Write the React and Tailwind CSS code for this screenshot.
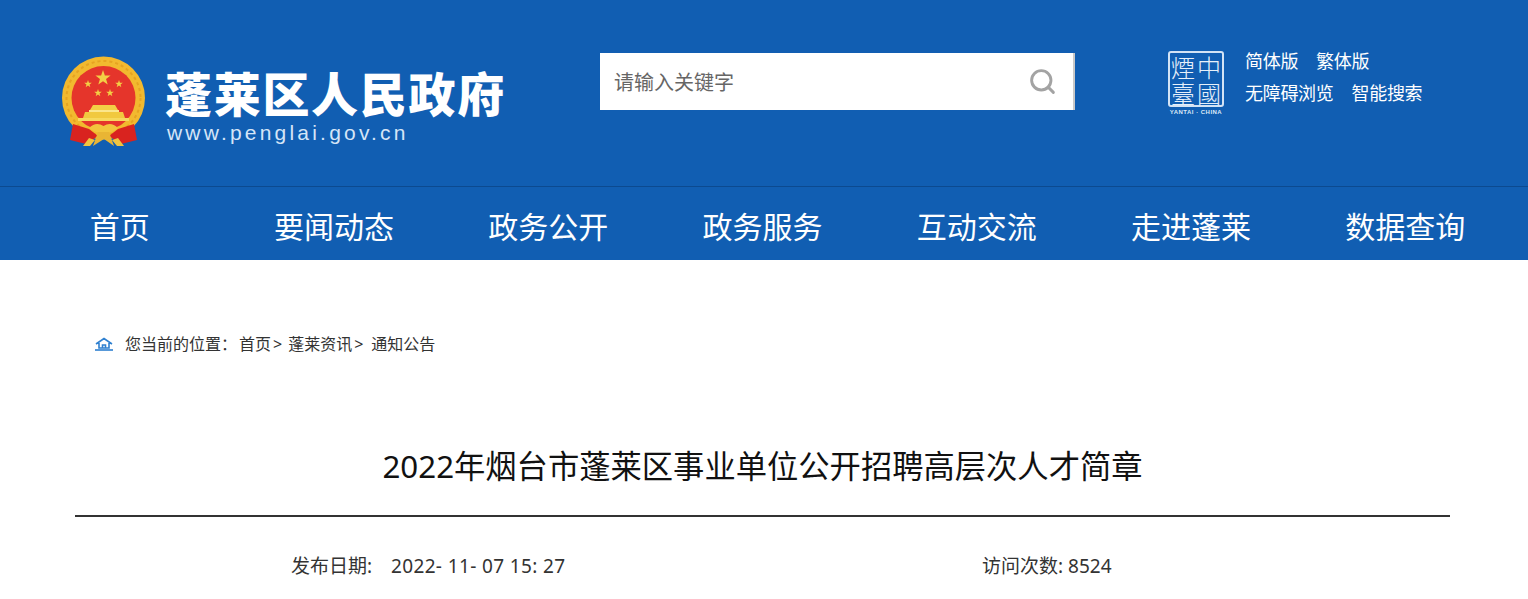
import { Search } from 'lucide-react';

const navItems = ['首页', '要闻动态', '政务公开', '政务服务', '互动交流', '走进蓬莱', '数据查询'];

const Star = ({ x, y, r }) => {
  const points = [];
  for (let i = 0; i < 10; i++) {
    const radius = i % 2 === 0 ? r : r * 0.4;
    const angle = (Math.PI / 5) * i - Math.PI / 2;
    points.push(`${x + radius * Math.cos(angle)},${y + radius * Math.sin(angle)}`);
  }
  return <polygon points={points.join(' ')} fill="#f3cf45" />;
};

const Emblem = () => (
  <svg width="90" height="92" viewBox="0 0 90 92" className="shrink-0">
    {/* wheat ring */}
    <circle cx="44.5" cy="42" r="41.5" fill="#f2b92f" />
    <circle cx="44.5" cy="42" r="37" fill="none" stroke="#e6a321" strokeWidth="2" strokeDasharray="3 3" />
    <circle cx="44.5" cy="42" r="32" fill="#e5352b" />
    {/* stars */}
    <Star x={44} y={22} r={8} />
    <Star x={29} y={28} r={4} />
    <Star x={60} y={28} r={4} />
    <Star x={39} y={37} r={4} />
    <Star x={51} y={37} r={4} />
    {/* gate */}
    <path d="M34 49 H56 L59 54 H31 Z" fill="#f3cf45" />
    <rect x="30" y="54" width="30" height="2" fill="#fbe68c" />
    <path d="M26 56 H64 L66 62 H24 Z" fill="#f1c93f" />
    <rect x="19" y="62" width="51" height="3" fill="#f6d95e" />
    {/* ribbons */}
    <path d="M14 68 L11 84 L27 88 L39 80 L30 73 Z" fill="#d9231f" />
    <path d="M75 68 L78 84 L62 88 L50 80 L59 73 Z" fill="#d9231f" />
    {/* knot */}
    <path d="M30 72 Q37 65 44.5 70 Q52 65 59 72 Q52 78 44.5 76 Q37 78 30 72 Z" fill="#f2c53d" />
    <path d="M34 90 L39 76 H50 L55 90 L45 83 Z" fill="#e9b534" />
    <path d="M24 90 L30 82 L36 84 L31 90 Z" fill="#f0c440" />
    <path d="M65 90 L59 82 L53 84 L58 90 Z" fill="#f0c440" />
  </svg>
);

const YantaiSeal = () => (
  <div className="flex flex-col items-center w-[56px] shrink-0">
    <div className="w-[56px] h-[56px] border-2 border-[#d3e3f5] rounded-[3px] grid grid-cols-2 grid-rows-2 place-items-center text-[24px] leading-[25px] font-extralight text-[#e6f0fa] font-['Noto_Sans_CJK_TC',sans-serif]">
      <span>煙</span>
      <span>中</span>
      <span>臺</span>
      <span>國</span>
    </div>
    <span className="mt-[2px] text-[6px] leading-[7px] font-bold tracking-[0.08em] text-[#dce9f7] whitespace-nowrap font-['Liberation_Sans',sans-serif]">
      YANTAI · CHINA
    </span>
  </div>
);

export default function App() {
  return (
    <div className="h-[599px] overflow-hidden bg-white font-['Noto_Sans','Noto_Sans_CJK_SC',sans-serif] text-[#333]">
      {/* Header */}
      <header className="h-[187px] bg-[#115eb2] border-b border-[#0c4a90] flex items-start text-white">
        <div className="ml-[59px] mt-[56px]">
          <Emblem />
        </div>
        <div className="ml-[16px] mt-[63px] w-[347px] shrink-0">
          <div className="text-[47px] leading-[58px] font-black tracking-[1.7px] whitespace-nowrap font-['Noto_Sans_CJK_SC',sans-serif]">
            蓬莱区人民政府
          </div>
          <div className="pl-[2px] text-[21px] leading-[24px] tracking-[3.2px] text-[#d5e5f7] whitespace-nowrap font-['Liberation_Sans',sans-serif]">
            www.penglai.gov.cn
          </div>
        </div>
        <div className="ml-[88px] mt-[53px] w-[475px] h-[57px] bg-white border-r-2 border-[#c9c9c9] flex items-center justify-between pl-[14px] pr-[16px] shrink-0">
          <span className="text-[20px] text-[#666] pt-[2px]">请输入关键字</span>
          <Search size={29} strokeWidth={2.4} className="text-[#a3a3a3]" />
        </div>
        <div className="ml-[93px] mt-[51px]">
          <YantaiSeal />
        </div>
        <div className="ml-[21px] mt-[45px] text-[18px] leading-[32px] tracking-[-0.3px]">
          <div className="flex gap-[18px]">
            <span>简体版</span>
            <span>繁体版</span>
          </div>
          <div className="flex gap-[18px]">
            <span>无障碍浏览</span>
            <span>智能搜索</span>
          </div>
        </div>
      </header>

      {/* Nav */}
      <nav className="h-[73px] bg-[#115eb2] text-white">
        <div className="w-[1500px] ml-[12.5px] h-full grid grid-cols-7 items-center">
          {navItems.map(item => (
            <a key={item} className="text-center text-[30px] leading-[79px] h-full">{item}</a>
          ))}
        </div>
      </nav>

      {/* Breadcrumb */}
      <div className="mt-[72px] ml-[95px] flex items-center h-[24px] text-[16px] text-[#333] whitespace-nowrap">
        <svg width="18" height="14" viewBox="0 0 18 14" fill="none" stroke="#2f80d0" strokeWidth="1.6" className="mr-[12px]">
          <path d="M1 7 L9 1.5 L17 7 M4 6 V11 H14 V6 M7.5 11 V8 H10.5 V11" />
          <path d="M0 13 H18" />
        </svg>
        <span className="mr-[2px]">您当前的位置：</span>
        <span>首页</span>
        <span className="ml-[2px] mr-[6px]">&gt;</span>
        <span>蓬莱资讯</span>
        <span className="ml-[2px] mr-[8px]">&gt;</span>
        <span>通知公告</span>
      </div>

      {/* Article head */}
      <div className="mx-[75px] mt-[87px] w-[1375px] border-b-2 border-[#333] h-[74px]">
        <h1 className="text-center text-[31.3px] leading-[46px] text-[#111] font-normal whitespace-nowrap">
          2022年烟台市蓬莱区事业单位公开招聘高层次人才简章
        </h1>
      </div>
      <div className="mt-[35px] flex text-[19px] leading-[28px] text-[#333]">
        <span className="ml-[291px] w-[691px] whitespace-pre">
          发布日期:   <span className="ml-[4px] tracking-[0.37px]">2022- 11- 07 15: 27</span>
        </span>
        <span>访问次数: 8524</span>
      </div>
    </div>
  );
}
